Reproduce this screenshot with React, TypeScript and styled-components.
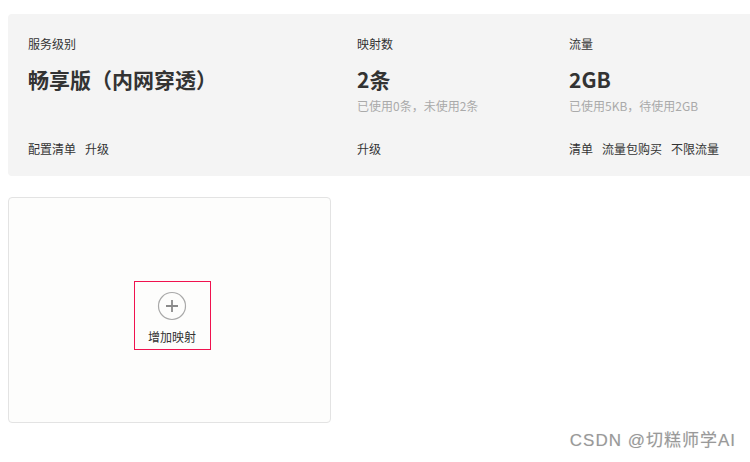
import React from "react";
import styled, { createGlobalStyle } from "styled-components";

const Global = createGlobalStyle`
  html, body { margin: 0; padding: 0; background: #fff; overflow: hidden; }
  body { font-family: "Noto Sans CJK SC", "Noto Sans", sans-serif; color: #333; }
`;

const Page = styled.div`
  width: 750px;
  height: 462px;
  padding: 14px 0 0 8px;
  box-sizing: border-box;
  position: relative;
  display: flex;
  flex-direction: column;
  gap: 21px;
`;

const Summary = styled.div`
  background: #f4f4f4;
  border-radius: 4px 0 0 4px;
  height: 162px;
  box-sizing: border-box;
  padding: 0 0 0 20px;
  display: grid;
  grid-template-columns: 329px 212px 1fr;
`;

const Col = styled.div`
  display: flex;
  flex-direction: column;
`;

const Label = styled.div`
  font-size: 12px;
  line-height: 16px;
  margin-top: 22px;
  color: #333;
`;

const Value = styled.div`
  font-size: 21px;
  font-weight: 700;
  line-height: 26px;
  margin-top: 14px;
  color: #333;
`;

const Sub = styled.div`
  font-size: 12px;
  line-height: 16px;
  height: 16px;
  margin-top: 6px;
  color: #aaa;
`;

const Links = styled.div`
  display: flex;
  gap: 9px;
  margin-top: 27px;
  font-size: 12px;
  line-height: 16px;
  color: #333;
`;

const Card = styled.div`
  width: 323px;
  height: 226px;
  box-sizing: border-box;
  border: 1px solid #e3e3e3;
  border-radius: 4px;
  background: #fdfdfc;
  display: flex;
  align-items: center;
  justify-content: center;
`;

const AddButton = styled.div`
  width: 77px;
  height: 69px;
  box-sizing: border-box;
  border: 1px solid #f0124f;
  margin: 10px 0 0 5px;
  display: flex;
  flex-direction: column;
  align-items: center;
  padding-top: 9px;
  gap: 8px;
  font-size: 12px;
  line-height: 16px;
  color: #333;
`;

const Watermark = styled.div`
  position: absolute;
  right: 14px;
  bottom: 11px;
  font-family: "Liberation Sans", "Noto Sans CJK SC", sans-serif;
  font-size: 17px;
  letter-spacing: 1px;
  color: #999;
  text-shadow: 0 0 1px #ddd;
`;

const PlusIcon = () => (
  <svg width="30" height="30" viewBox="0 0 30 30">
    <circle cx="15" cy="15" r="13.5" fill="none" stroke="#a9a9a9" strokeWidth="1.2" />
    <path d="M15 9v12M9 15h12" stroke="#8a8a8a" strokeWidth="1.8" />
  </svg>
);

export default function App() {
  return (
    <>
      <Global />
      <Page>
        <Summary>
          <Col>
            <Label>服务级别</Label>
            <Value>畅享版（内网穿透）</Value>
            <Sub />
            <Links>
              <span>配置清单</span>
              <span>升级</span>
            </Links>
          </Col>
          <Col>
            <Label>映射数</Label>
            <Value>2条</Value>
            <Sub>已使用0条，未使用2条</Sub>
            <Links>
              <span>升级</span>
            </Links>
          </Col>
          <Col>
            <Label>流量</Label>
            <Value>2GB</Value>
            <Sub>已使用5KB，待使用2GB</Sub>
            <Links>
              <span>清单</span>
              <span>流量包购买</span>
              <span>不限流量</span>
            </Links>
          </Col>
        </Summary>
        <Card>
          <AddButton>
            <PlusIcon />
            <span>增加映射</span>
          </AddButton>
        </Card>
        <Watermark>CSDN @切糕师学AI</Watermark>
      </Page>
    </>
  );
}
